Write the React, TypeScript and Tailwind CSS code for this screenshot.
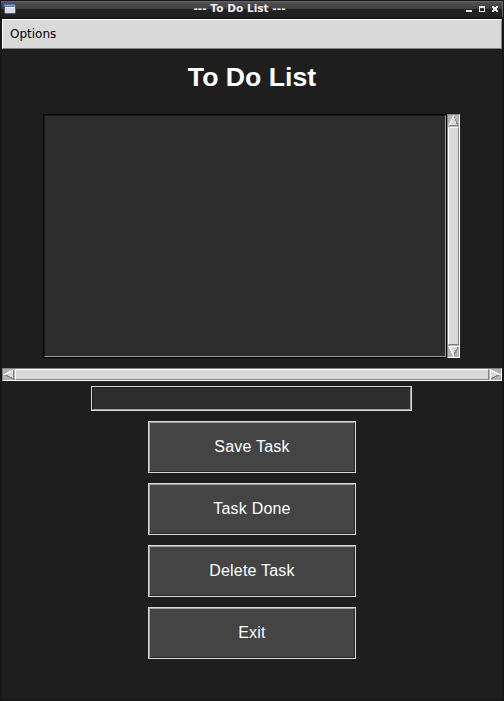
const actions = ["Save Task", "Task Done", "Delete Task", "Exit"];

function Arrow({ direction }: { direction: "up" | "down" | "left" | "right" }) {
  const shapes = {
    up: { face: "5.5,0 11,11 0,11", light: "5.5,0 6.5,0 2,10 0,11", dark: "5.5,0 11,11 0,11 1.5,10 9,10" },
    down: { face: "0,0 11,0 5.5,11", light: "11,0 0,0 5.5,11 5.5,8 2,1 10,1", dark: "11,0 5.5,11 5.5,8 9.5,1" },
    left: { face: "0,5.5 11,0 11,11", light: "0,5.5 11,0 11,1 3,5.5", dark: "0,5.5 11,11 11,0 10,1 10,9 3,5.5" },
    right: { face: "0,0 11,5.5 0,11", light: "0,11 0,0 11,5.5 8,5.5 1,2 1,10", dark: "0,11 11,5.5 8,5.5 1,9" },
  };
  const s = shapes[direction];
  return (
    <svg width="11" height="11" viewBox="0 0 11 11" shapeRendering="crispEdges" className="block shrink-0">
      <polygon points={s.face} fill="#d9d9d9" />
      <polygon points={s.dark} fill="#828282" />
      <polygon points={s.light} fill="#fff" />
    </svg>
  );
}

export default function App() {
  return (
    <div className="flex h-[701px] w-[504px] flex-col overflow-hidden bg-[#171717] font-['DejaVu_Sans',sans-serif]">
      <header className="flex h-[19px] shrink-0 border-t border-[#171516] px-px pb-[2px]">
        <div className="grid h-4 w-full grid-cols-[16px_1fr_40px] border-t border-r border-[#656565] bg-[linear-gradient(#515151_0px,#3d3d3d_7px,#222_7px,#202020_15px)]">
          <svg width="13" height="12" viewBox="0 0 13 12" shapeRendering="crispEdges" className="ml-[3px] mt-px">
            <path fill="#4f77ad" d="M0 1h11v3H0z" />
            <path fill="#7fa3d1" d="M1 2h10v1H1z" />
            <path fill="#d9dbd8" d="M1 4h10v6H1z" />
            <path fill="#f0f0ee" d="M1 4h10v1H1z" />
            <path fill="#4c607a" d="M0 4h1v6H0zM11 2h1v8h-1zM1 10h10v1H1z" />
          </svg>
          <h1 className="-mt-px text-center text-[10.6px] font-bold leading-[14px] text-[#eee]">--- To Do List ---</h1>
          <svg width="40" height="15" viewBox="0 0 40 15" shapeRendering="crispEdges" fill="#e6e6e6">
            <path d="M4 8h6v2H4z" />
            <path fillRule="evenodd" d="M17 4h6v6h-6zM18 6v3h4V6z" />
            <path d="M30 4h2v1h2V4h2v2h-1v2h1v2h-2V9h-2v1h-2V8h1V6h-1z" />
          </svg>
        </div>
      </header>
      <main className="mx-[2px] mb-[2px] flex grow flex-col items-center bg-[#1e1e1e]">
        <nav className="flex h-[30px] w-full items-center border border-t-white border-l-white border-r-[#828282] border-b-[#828282] bg-[#d9d9d9] pl-[7px] text-[12px] text-black">
          Options
        </nav>
        <h2 className="mt-2 h-10 font-['Liberation_Sans',Arial,sans-serif] text-[26.67px] font-bold leading-10 text-white">To Do List</h2>
        <section className="mt-[17px] mr-px flex h-[244px] w-[417px]">
          <div className="w-[404px] border border-black bg-[#2d2d2d]">
            <div className="h-full border border-t-[#1b1b1b] border-l-[#1b1b1b] border-r-[#a0a0a0] border-b-[#a0a0a0]" />
          </div>
          <div className="flex w-[13px] flex-col border border-t-[#828282] border-l-[#828282] border-r-white border-b-white bg-[#b3b3b3]">
            <Arrow direction="up" />
            <div className="my-px grow border border-t-white border-l-white border-r-[#828282] border-b-[#828282] bg-[#d9d9d9]" />
            <Arrow direction="down" />
          </div>
        </section>
        <div className="mt-[10px] flex h-[13px] w-full border border-t-[#828282] border-l-[#828282] border-r-white border-b-white bg-[#b3b3b3]">
          <Arrow direction="left" />
          <div className="mx-px grow border border-t-white border-l-white border-r-[#828282] border-b-[#828282] bg-[#d9d9d9]" />
          <Arrow direction="right" />
        </div>
        <div className="mt-[5px] mr-px h-[25px] w-[321px] border border-[#d9d9d9] bg-[#2d2d2d]">
          <div className="h-full border border-t-[#1b1b1b] border-l-[#1b1b1b] border-r-[#a0a0a0] border-b-[#a0a0a0]" />
        </div>
        <div className="mt-[10px] flex flex-col gap-[10px]">
          {actions.map((label) => (
            <button key={label} className="h-[52px] w-[208px] border border-[#d9d9d9] bg-[#444] font-['Liberation_Sans',Arial,sans-serif] text-[16px] tracking-[0.2px] text-white">
              <span className="flex h-full items-center justify-center border border-t-[#a1a1a1] border-l-[#a1a1a1] border-r-[#292929] border-b-[#292929]">{label}</span>
            </button>
          ))}
        </div>
      </main>
    </div>
  );
}
